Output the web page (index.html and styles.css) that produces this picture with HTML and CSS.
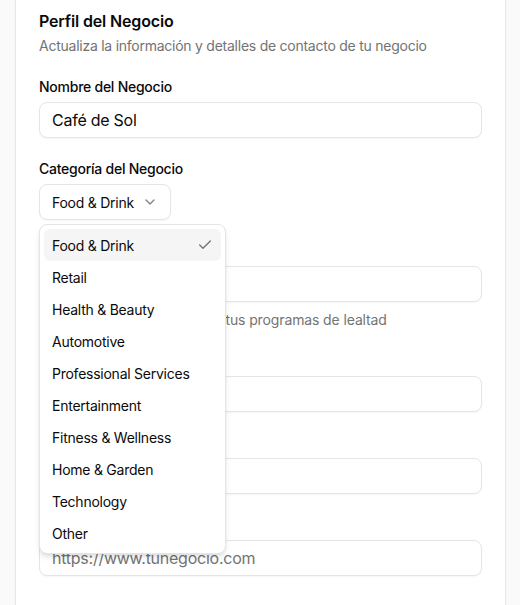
FILE: index.html
```html
<!DOCTYPE html>
<html lang="es">
<head>
<meta charset="utf-8">
<title>Perfil del Negocio</title>
<link rel="stylesheet" href="styles.css">
</head>
<body>
<div class="page">
  <section class="card">
    <h2 class="card-title">Perfil del Negocio</h2>
    <p class="card-desc">Actualiza la información y detalles de contacto de tu negocio</p>
    <form class="form">
      <div class="field">
        <label class="label">Nombre del Negocio</label>
        <input class="input" type="text" value="Café de Sol">
      </div>
      <div class="field">
        <label class="label">Categoría del Negocio</label>
        <div class="select">
          <button type="button" class="select-trigger">
            <span>Food &amp; Drink</span>
            <svg class="chevron" width="16" height="16" viewBox="0 0 24 24" fill="none" stroke="currentColor" stroke-width="2" stroke-linecap="round" stroke-linejoin="round"><path d="m6 9 6 6 6-6"/></svg>
          </button>
          <div class="menu">
            <div class="item selected"><span>Food &amp; Drink</span>
              <svg class="check" width="16" height="16" viewBox="0 0 24 24" fill="none" stroke="currentColor" stroke-width="2" stroke-linecap="round" stroke-linejoin="round"><path d="M20 6 9 17l-5-5"/></svg>
            </div>
            <div class="item">Retail</div>
            <div class="item">Health &amp; Beauty</div>
            <div class="item">Automotive</div>
            <div class="item">Professional Services</div>
            <div class="item">Entertainment</div>
            <div class="item">Fitness &amp; Wellness</div>
            <div class="item">Home &amp; Garden</div>
            <div class="item">Technology</div>
            <div class="item">Other</div>
          </div>
        </div>
      </div>
      <div class="field">
        <label class="label">Nombre para Mostrar</label>
        <input class="input" type="text" value="Café de Sol">
        <p class="help">Este nombre se mostrará en tus programas de lealtad</p>
      </div>
      <div class="field">
        <label class="label">Correo Electrónico</label>
        <input class="input" type="email" value="hola@cafesol.com">
      </div>
      <div class="field">
        <label class="label">Teléfono</label>
        <input class="input" type="tel" value="+34 612 345 678">
      </div>
      <div class="field">
        <label class="label">Sitio Web</label>
        <input class="input" type="url" placeholder="https://www.tunegocio.com">
      </div>
    </form>
  </section>
</div>
</body>
</html>
```
FILE: styles.css
```css
* { box-sizing: border-box; }

html, body {
  margin: 0;
  background: #fafafa;
  font-family: Inter, "Noto Sans", "Liberation Sans", sans-serif;
  color: #0a0a0a;
  letter-spacing: -0.25px;
}

.page {
  padding: 0 14px 0 15px;
}

.card {
  background: #ffffff;
  border: 1px solid #e8e8e8;
  border-top: 0;
  padding: 13px 23px 40px;
  box-shadow: 0 1px 2px rgba(0, 0, 0, 0.04);
  min-height: 640px;
}

.card-title {
  margin: 0;
  font-size: 16px;
  line-height: 16px;
  font-weight: 600;
  letter-spacing: -0.15px;
}

.card-desc {
  margin: 7px 0 0;
  font-size: 14px;
  line-height: 20px;
  color: #737373;
}

.form {
  margin-top: 24px;
  display: flex;
  flex-direction: column;
  gap: 24px;
}

.field {
  display: flex;
  flex-direction: column;
  gap: 8px;
}

.label {
  font-size: 14px;
  line-height: 14px;
  font-weight: 500;
  color: #0a0a0a;
}

.input {
  height: 36px;
  width: 100%;
  border: 1px solid #e5e5e5;
  border-radius: 8px;
  padding: 0 12px;
  font-family: inherit;
  font-size: 16px;
  letter-spacing: -0.25px;
  color: #0a0a0a;
  background: #ffffff;
  box-shadow: 0 1px 2px rgba(0, 0, 0, 0.04);
  outline: none;
}

.input::placeholder {
  color: #737373;
}

.help {
  margin: 0;
  font-size: 14px;
  line-height: 20px;
  letter-spacing: -0.12px;
  color: #737373;
}

.select {
  position: relative;
}

.select-trigger {
  height: 36px;
  display: inline-flex;
  align-items: center;
  gap: 8px;
  padding: 0 12px;
  border: 1px solid #e5e5e5;
  border-radius: 8px;
  background: #ffffff;
  font-family: inherit;
  font-size: 14px;
  letter-spacing: -0.25px;
  color: #0a0a0a;
  box-shadow: 0 1px 2px rgba(0, 0, 0, 0.04);
}

.chevron {
  opacity: 0.5;
}

.menu {
  position: absolute;
  top: calc(100% + 4px);
  left: 0;
  width: 187px;
  z-index: 10;
  background: #ffffff;
  border: 1px solid #e5e5e5;
  border-radius: 8px;
  padding: 4px;
  box-shadow: 0 4px 6px -1px rgba(0, 0, 0, 0.1), 0 2px 4px -2px rgba(0, 0, 0, 0.1);
}

.item {
  height: 32px;
  display: flex;
  align-items: center;
  justify-content: space-between;
  padding: 0 8px;
  border-radius: 6px;
  font-size: 14px;
  color: #0a0a0a;
}

.item.selected {
  background: #f5f5f5;
}

.check {
  color: #737373;
}
```
